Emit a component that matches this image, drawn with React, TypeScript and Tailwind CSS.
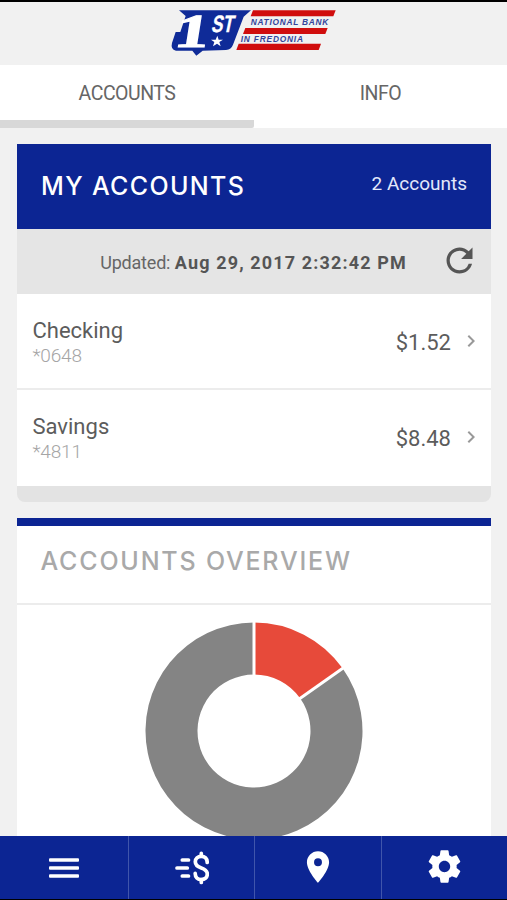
import React from 'react';
import { MdChevronRight, MdPlace, MdRefresh } from 'react-icons/md';

interface Account {
    name: string;
    mask: string;
    balance: number;
    color: string;
}

const accounts: Account[] = [
    { name: 'Checking', mask: '*0648', balance: 1.52, color: '#e74a3a' },
    { name: 'Savings', mask: '*4811', balance: 8.48, color: '#848484' }
];

const BankLogo: React.FC = () => (
    <svg viewBox="0 6 561 189" className="h-[63px] w-[187px]" role="img" aria-label="1st National Bank in Fredonia">
        <path d="M57 31H273L251 50L219 134Q214 148 198 150L128 152L109 167L97 152H48Q31 149 36 129L47 96H61L77 48Z" fill="#0f2b98" />
        <text transform="translate(39 141) skewX(-9) scale(1.5 1.03)" fill="#fff" stroke="#fff" strokeWidth="3" fontSize="138" fontWeight="700" className="font-['Liberation_Serif',serif]">1</text>
        <text transform="translate(152 95) skewX(-12)" fill="#fff" stroke="#fff" strokeWidth="1" fontSize="71" fontWeight="700" className="font-['Liberation_Sans',sans-serif]" textLength="66" lengthAdjust="spacingAndGlyphs">ST</text>
        <path d="M172 107L176 119H189L178 126L182 139L171 131L159 139L163 126L153 119H167Z" fill="#fff" />
        <g fill="#d00d0d">
            <path d="M279 31H527L520 49H272Z" />
            <path d="M256 84H503L496 102H249Z" />
            <path d="M236 131H483L476 150H229Z" />
        </g>
        <g fill="#33449b" fontSize="25" fontWeight="700" fontStyle="italic" className="font-['Liberation_Sans',sans-serif]">
            <text x="272" y="75" textLength="233">NATIONAL BANK</text>
            <text x="242" y="126" textLength="187">IN FREDONIA</text>
        </g>
    </svg>
);

const AccountRow: React.FC<{ account: Account }> = ({ account }) => (
    <div className="flex h-24 items-center justify-between border-b-2 border-[#ececec] bg-white pl-[15.5px] pr-2 last:border-white">
        <div className="pt-1">
            <div className="text-[22px] leading-[26px] text-[#5c5c5c]">{account.name}</div>
            <div className="text-[19px] font-light leading-6 tracking-[-0.2px] text-[#a5a5a5]">{account.mask}</div>
        </div>
        <div className="flex items-center gap-2">
            <span className="pt-0.5 text-[22px] text-[#5c5c5c]">${account.balance.toFixed(2)}</span>
            <MdChevronRight size={24} className="text-[#999999]" />
        </div>
    </div>
);

const CENTER = 110;
const OUTER = 108.5;
const INNER = 56.5;

const pointAt = (fraction: number, radius: number) => {
    const angle = fraction * 2 * Math.PI;
    return `${CENTER + radius * Math.sin(angle)} ${CENTER - radius * Math.cos(angle)}`;
};

const BalanceChart: React.FC = () => {
    const total = accounts.reduce((sum, a) => sum + a.balance, 0);
    const slices = accounts.map((account, i) => {
        const start = accounts.slice(0, i).reduce((sum, a) => sum + a.balance, 0) / total;
        return { account, start, end: start + account.balance / total };
    });

    return (
        <svg viewBox="0 0 220 220" className="h-[220px] w-[220px] shrink-0">
            {slices.map(({ account, start, end }) => {
                const large = end - start > 0.5 ? 1 : 0;
                return (
                    <path
                        key={account.name}
                        fill={account.color}
                        d={`M${pointAt(start, OUTER)} A${OUTER} ${OUTER} 0 ${large} 1 ${pointAt(end, OUTER)} L${pointAt(end, INNER)} A${INNER} ${INNER} 0 ${large} 0 ${pointAt(start, INNER)}Z`}
                    />
                );
            })}
            {/* Gaps between slices */}
            {slices.map(({ account, start }) => (
                <path
                    key={account.name}
                    stroke="#fff"
                    strokeWidth="3"
                    d={`M${pointAt(start, INNER - 2)} L${pointAt(start, OUTER + 2)}`}
                />
            ))}
        </svg>
    );
};

const MenuIcon: React.FC = () => (
    <svg viewBox="0 0 30 20" className="h-5 w-[30px]" fill="currentColor">
        <rect y="0.2" width="30" height="3.6" rx="1" />
        <rect y="8.2" width="30" height="3.6" rx="1" />
        <rect y="16.2" width="30" height="3.6" rx="1" />
    </svg>
);

const TransferIcon: React.FC = () => (
    <svg viewBox="0 0 34 34" className="h-[34px] w-[34px]" fill="none" stroke="currentColor" strokeWidth="3.7" strokeLinecap="round">
        <path d="M7.3 9H13.5M2 17H12.3M7.3 25H13.5" />
        <path d="M26.3 2.4V5M26.3 28.5V31.5" />
        <path d="M32.2 11.5C32.2 7.5 29.8 5.3 26.3 5.3C22.8 5.3 20.3 7.6 20.3 10.7C20.3 14 22.4 15.6 26.3 16.9C30.2 18.2 32.3 19.8 32.3 23.1C32.3 26.4 29.9 28.5 26.3 28.5C22.5 28.5 20.2 26.1 20.2 22.4" />
    </svg>
);

const SettingsIcon: React.FC = () => (
    <svg viewBox="0 0 24 24" className="h-[39px] w-[39px]" fill="currentColor">
        <path d="M19.43 12.98c.04-.32.07-.64.07-.98s-.03-.66-.07-.98l2.11-1.65c.19-.15.24-.42.12-.64l-2-3.46c-.12-.22-.39-.3-.61-.22l-2.49 1c-.52-.4-1.08-.73-1.69-.98l-.38-2.65C14.46 2.18 14.25 2 14 2h-4c-.25 0-.46.18-.49.42l-.38 2.65c-.61.25-1.17.59-1.69.98l-2.49-1c-.23-.09-.49 0-.61.22l-2 3.46c-.13.22-.07.49.12.64l2.11 1.65c-.04.32-.07.65-.07.98s.03.66.07.98l-2.11 1.65c-.19.15-.24.42-.12.64l2 3.46c.12.22.39.3.61.22l2.49-1c.52.4 1.08.73 1.69.98l.38 2.65c.03.24.24.42.49.42h4c.25 0 .46-.18.49-.42l.38-2.65c.61-.25 1.17-.59 1.69-.98l2.49 1c.23.09.49 0 .61-.22l2-3.46c.12-.22.07-.49-.12-.64l-2.11-1.65zM12 15.5c-1.93 0-3.5-1.57-3.5-3.5s1.57-3.5 3.5-3.5 3.5 1.57 3.5 3.5-1.57 3.5-3.5 3.5z" />
    </svg>
);

const App: React.FC = () => {
    return (
        <div className="flex h-[900px] w-[507px] flex-col overflow-hidden bg-[#f1f1f1] font-['Roboto',sans-serif]">
            <header className="flex h-[65px] shrink-0 justify-center border-t-2 border-black">
                <BankLogo />
            </header>

            {/* Tabs */}
            <div className="flex h-[63px] shrink-0 bg-white text-[19.5px] tracking-[-0.5px] text-[#666666]">
                <button className="w-[254px] rounded-br-xs border-b-8 border-[#d8d8d8] pt-[3px] text-center">ACCOUNTS</button>
                <button className="flex-1 border-b-8 border-white pt-[3px] text-center">INFO</button>
            </div>

            <main className="flex min-h-0 flex-1 flex-col gap-4 overflow-hidden pl-[17px] pr-4 pt-4">
                <section className="shrink-0 overflow-hidden rounded-b-lg">
                    <div className="flex h-[85px] items-center justify-between bg-[#0c2593] pl-6 pr-6 text-white">
                        <h1 className="font-['Inter',sans-serif] text-[25px] font-medium tracking-[1.35px]">MY ACCOUNTS</h1>
                        <span className="pb-1 text-[19px] text-[#e3e8fb]">2 Accounts</span>
                    </div>
                    <div className="flex h-[65px] items-center justify-end bg-[#e5e5e5] pr-3 text-[#555555]">
                        <span className="mr-[33px] pt-0.5 text-[18px]">
                            <span className="tracking-[-0.2px] text-[#666666]">Updated:</span>{' '}
                            <b className="font-bold tracking-[1.15px]">Aug 29, 2017 2:32:42 PM</b>
                        </span>
                        <MdRefresh size={39} className="mb-0.5" />
                    </div>
                    <div>
                        {accounts.map((account) => (
                            <AccountRow key={account.name} account={account} />
                        ))}
                    </div>
                    <div className="h-4 bg-[#e3e3e3]" />
                </section>

                <section className="flex shrink-0 flex-col items-center border-t-8 border-[#0c2593] bg-white">
                    <div className="flex h-[79px] w-full items-center border-b-2 border-[#ececec] pb-1.5 pl-[23.5px]">
                        <h2 className="font-['Inter',sans-serif] text-[25px] font-medium tracking-[1.8px] text-[#a9a9a9]">ACCOUNTS OVERVIEW</h2>
                    </div>
                    <div className="flex h-[260px] pt-[16.4px]">
                        <BalanceChart />
                    </div>
                </section>
            </main>

            <nav className="grid h-16 shrink-0 grid-cols-[129px_126px_127px_125px] divide-x divide-[#4055ab] border-b border-black bg-[#0c2593] text-white">
                <button className="flex items-center justify-center"><MenuIcon /></button>
                <button className="flex items-center justify-center"><TransferIcon /></button>
                <button className="flex items-center justify-center pb-0.5"><MdPlace size={38} /></button>
                <button className="flex items-center justify-center pb-0.5"><SettingsIcon /></button>
            </nav>
        </div>
    );
};

export default App;
